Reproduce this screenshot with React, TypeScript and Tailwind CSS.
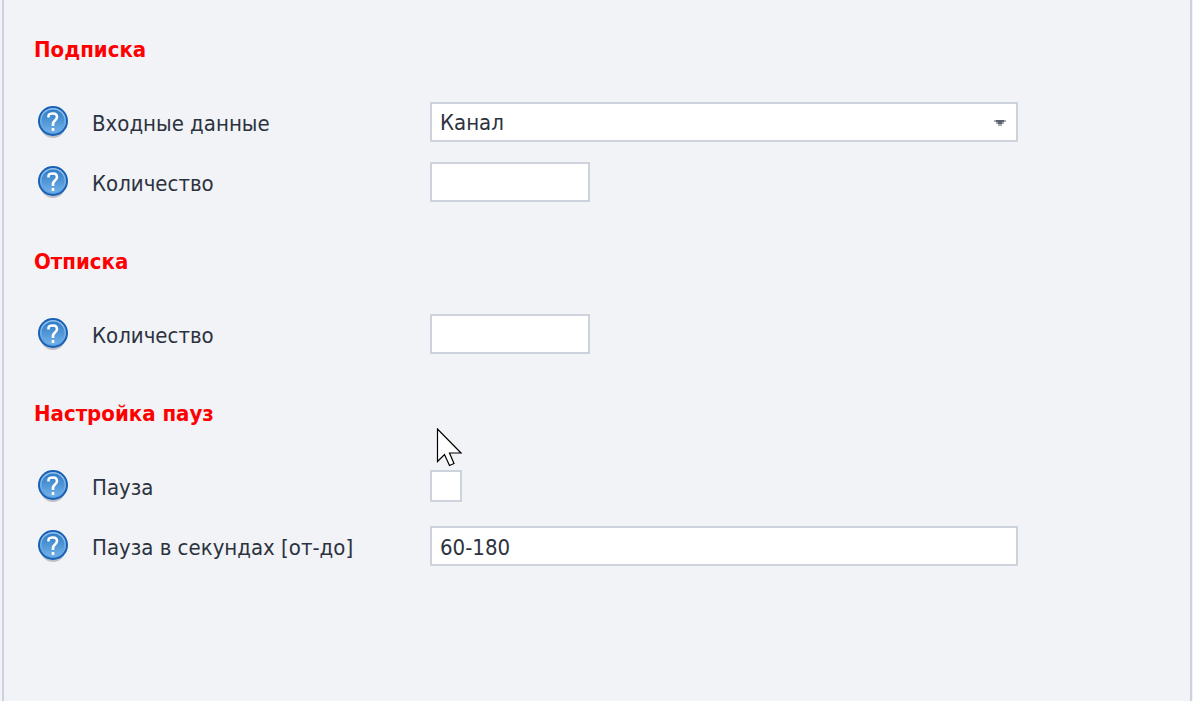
import { useState, type ReactNode } from 'react';

type RowProps = {
  id: string;
  label: string;
  children: ReactNode;
};

type SectionProps = {
  title: string;
  children: ReactNode;
};

const fieldClass =
  'h-10 border-2 border-[#cdd3dc] bg-white px-2 pt-0.5 text-[22px] leading-7 text-[#2c323e] outline-none rounded-none';

function HelpIcon() {
  return (
    <svg width="30" height="32" viewBox="0 0 30 32" aria-hidden="true">
      <defs>
        <linearGradient id="help-fill" x1="0" y1="0" x2="0" y2="1">
          <stop offset="0" stopColor="#2f7cc6" />
          <stop offset="1" stopColor="#70b0e6" />
        </linearGradient>
        <linearGradient id="help-rim" x1="0" y1="0" x2="0" y2="1">
          <stop offset="0" stopColor="#9cc5ec" />
          <stop offset="1" stopColor="#5b9fdf" />
        </linearGradient>
      </defs>
      <ellipse cx="15" cy="18" rx="13" ry="14" fill="#bdc0c8" />
      <circle cx="15" cy="15" r="15" fill="#1660b6" />
      <circle cx="15" cy="15" r="13" fill="url(#help-rim)" />
      <circle cx="15" cy="15" r="11.5" fill="url(#help-fill)" />
      <path
        d="M10.5 11.500V10C10.500 8 12.500 7.500 15 7.500S19 8.500 19 11C19 14.500 15 14.500 15 18V20"
        fill="none"
        stroke="#fff"
        strokeWidth="2.600"
      />
      <path d="M13.700 22h2.600v3h-2.600z" fill="#fff" />
    </svg>
  );
}

function Row({ id, label, children }: RowProps) {
  return (
    <div className="flex min-h-10 items-center">
      <button type="button" aria-label={`Справка: ${label}`} className="mx-1 shrink-0">
        <HelpIcon />
      </button>
      <label htmlFor={id} className="ml-5 w-[338px] shrink-0 pt-1 text-[22px] leading-7 text-[#2c323e]">
        {label}
      </label>
      <div className="flex flex-1">{children}</div>
    </div>
  );
}

function Section({ title, children }: SectionProps) {
  return (
    <section>
      <h2 className="mb-9 text-[22px] leading-8 font-bold text-[#ff0000]">{title}</h2>
      <div className="flex flex-col gap-5">{children}</div>
    </section>
  );
}

// Mouse pointer, floats above the form
function Pointer() {
  return (
    <svg
      className="pointer-events-none absolute top-[428px] left-[436px]"
      width="27"
      height="40"
      viewBox="0 0 27 40"
      aria-hidden="true"
    >
      <path
        d="M1.5 1v32.5l7-7 5 11 4.500-2-4.500-10.500h11.500z"
        fill="#fff"
        stroke="#000"
        strokeWidth="1.200"
      />
    </svg>
  );
}

export default function App() {
  const [source, setSource] = useState('channel');
  const [followCount, setFollowCount] = useState('');
  const [unfollowCount, setUnfollowCount] = useState('');
  const [pause, setPause] = useState(false);
  const [pauseRange, setPauseRange] = useState('60-180');

  return (
    <div className="relative min-h-screen bg-[#f1f3f7] pr-px pl-0.5 font-['DejaVu_Sans_Condensed','Noto_Sans',sans-serif]">
      <main className="flex min-h-screen flex-col gap-11 border-x-2 border-[#cdd3dc] pt-[34px] pr-43 pl-[30px]">
        <Section title="Подписка">
          <Row id="source" label="Входные данные">
            <div className="relative flex-1">
              <select
                id="source"
                value={source}
                onChange={(e) => setSource(e.target.value)}
                className={`${fieldClass} w-full appearance-none`}
              >
                <option value="channel">Канал</option>
              </select>
              <svg
                className="pointer-events-none absolute top-[18px] right-3"
                width="12"
                height="6"
                viewBox="0 0 12 6"
                aria-hidden="true"
              >
                <path d="M0 0h12v2h-2v2H8v2H4V4H2V2H0z" fill="#a9adb5" />
                <path d="M2 0h8v2H8v2H4V2H2z" fill="#5c626d" />
              </svg>
            </div>
          </Row>
          <Row id="follow-count" label="Количество">
            <input
              id="follow-count"
              value={followCount}
              onChange={(e) => setFollowCount(e.target.value)}
              className={`${fieldClass} w-40`}
            />
          </Row>
        </Section>

        <Section title="Отписка">
          <Row id="unfollow-count" label="Количество">
            <input
              id="unfollow-count"
              value={unfollowCount}
              onChange={(e) => setUnfollowCount(e.target.value)}
              className={`${fieldClass} w-40`}
            />
          </Row>
        </Section>

        <Section title="Настройка пауз">
          <Row id="pause" label="Пауза">
            <input
              id="pause"
              type="checkbox"
              checked={pause}
              onChange={(e) => setPause(e.target.checked)}
              className="size-8 appearance-none border-2 border-[#cdd3dc] bg-white checked:bg-[#3681c8]"
            />
          </Row>
          <Row id="pause-range" label="Пауза в секундах [от-до]">
            <input
              id="pause-range"
              value={pauseRange}
              onChange={(e) => setPauseRange(e.target.value)}
              className={`${fieldClass} w-full`}
            />
          </Row>
        </Section>
      </main>
      <Pointer />
    </div>
  );
}
